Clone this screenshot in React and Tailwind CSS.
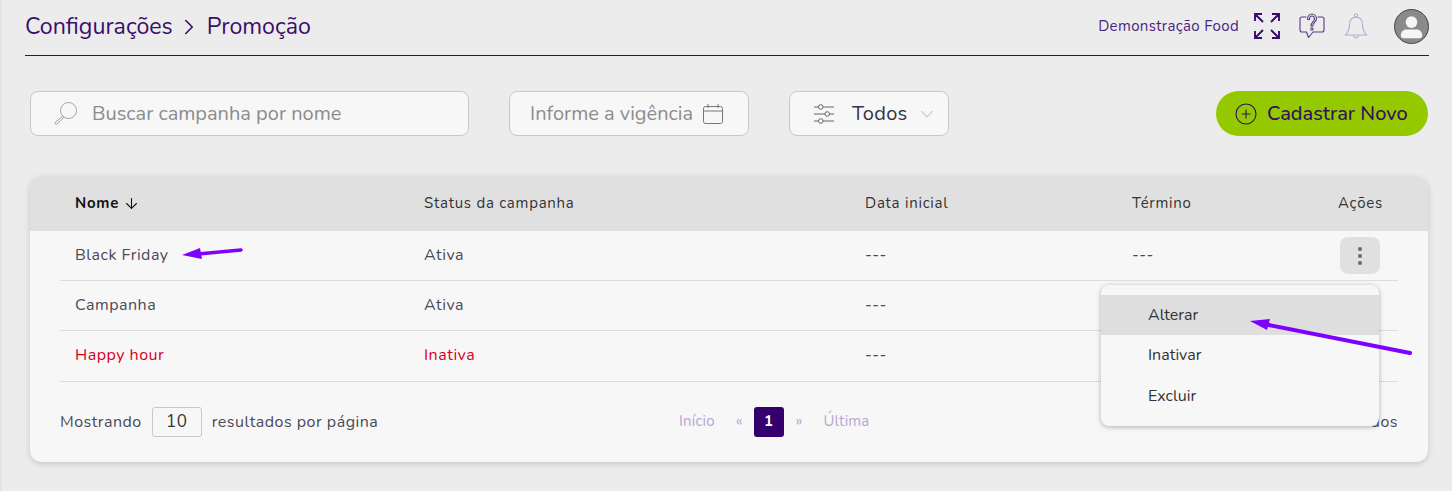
import { ArrowDown, ChevronDown, ChevronRight, CirclePlus } from "lucide-react";

const font = "font-['Nunito','Noto_Sans','Open_Sans',sans-serif]";

const cols = "grid grid-cols-[349px_441px_267px_206px_75px]";

const rows = [
  { name: "Black Friday", status: "Ativa", start: "---", end: "---", menu: true },
  { name: "Campanha", status: "Ativa", start: "---" },
  { name: "Happy hour", status: "Inativa", start: "---", off: true },
];

const Expand = () => (
  <svg width="26" height="26" viewBox="0 0 26 26" fill="none" stroke="#3a0a6e" strokeWidth="1.9">
    <path d="M1 8V1h7M1 1l8 8M18 1h7v7M25 1l-8 8M1 18v7h7M1 25l8-8M25 18v7h-7M25 25l-8-8" />
  </svg>
);

const HelpBubble = () => (
  <svg width="26" height="26" viewBox="0 0 26 26" fill="none" stroke="#5b3a86" strokeWidth="1.1" strokeLinecap="round" strokeLinejoin="round">
    <path d="M7 4H3Q1 4 1 6V17Q1 19 3 19H7.5L9.5 24.5L14 19H23Q25 19 25 17V6Q25 4 23 4H19" />
    <path d="M8.5 6.5C8.5 3 10.5 1 13 1S17.5 3 17.5 6C17.5 9 13.8 9.5 13.8 13H12C12 9 15.5 8.5 15.5 6C15.5 4.3 14.5 3 13 3S10.5 4.5 10.5 6.5Z" />
    <circle cx="12.9" cy="16" r="1.2" />
  </svg>
);

const BellIcon = () => (
  <svg width="24" height="26" viewBox="0 0 24 26" fill="none" stroke="#b9a9d3" strokeWidth="1.1" strokeLinejoin="round">
    <circle cx="12" cy="2.5" r="1.7" />
    <path d="M12 4.2C7.5 4.2 5.5 7.5 5.5 11.5C5.5 16.5 4 19.5 1.2 22H22.8C20 19.5 18.5 16.5 18.5 11.5C18.5 7.5 16.5 4.2 12 4.2Z" />
    <path d="M9.5 22.2a2.5 2.5 0 0 0 5 0" />
  </svg>
);

const Magnifier = () => (
  <svg width="24" height="23" viewBox="0 0 24 23" fill="none" stroke="#a3a3a3" strokeWidth="1">
    <circle cx="14.5" cy="8.5" r="8" />
    <path d="M8.8 14.2L1.2 20.4Q0.6 21.2 1.4 22Q2.2 22.6 3 22L10 15.4" />
  </svg>
);

const CalendarIcon = () => (
  <svg width="20" height="20" viewBox="0 0 20 20" fill="none" stroke="#777" strokeWidth="1">
    <rect x="0.5" y="2.5" width="19" height="17" rx="2" />
    <path d="M0.5 7H19.5M5 0V4M15 0V4" />
  </svg>
);

const Sliders = () => (
  <svg width="20" height="20" viewBox="0 0 20 20" fill="none" stroke="#666" strokeWidth="1">
    <path d="M0 3H4.5M9 3H20M0 10H11M15.5 10H20M0 17H4.5M9 17H20" />
    <circle cx="6.8" cy="3" r="2.3" />
    <circle cx="13.2" cy="10" r="2.3" />
    <circle cx="6.8" cy="17" r="2.3" />
  </svg>
);

const Avatar = () => (
  <div className="flex h-[35px] w-[35px] items-center justify-center overflow-hidden rounded-full border border-[#444] bg-[#8a8a8a]">
    <svg width="33" height="33" viewBox="0 0 34 34" fill="#f5f5f5">
      <circle cx="17" cy="12.5" r="6" />
      <path d="M6 26c0-4 3-6 6-6h10c3 0 6 2 6 6 0 2-1 3-3 3H9c-2 0-3-1-3-3z" />
    </svg>
  </div>
);

const Arrow = ({ className, width, height, d, tip, stroke }) => (
  <svg className={`pointer-events-none absolute ${className}`} width={width} height={height} viewBox={`0 0 ${width} ${height}`}>
    <path d={d} stroke="#7f00ff" strokeWidth={stroke} strokeLinecap="round" fill="none" />
    <polygon points={tip} fill="#7f00ff" />
  </svg>
);

export default function App() {
  return (
    <div className={`${font} relative h-[491px] w-[1452px] overflow-hidden border-l-2 border-[#e4e4e4] bg-[#ececec] text-[#4a4a55]`}>
      {/* Header */}
      <header className="ml-[23px] mr-[23px] flex h-[56px] items-center justify-between border-b border-[#35105f] pb-[3px]">
        <div className="mt-[2px] flex items-center text-[23.2px] text-[#3a0f6b]">
          <span>Configurações</span>
          <ChevronRight size={26} strokeWidth={1.5} className="ml-[3px] mr-[5px]" />
          <span>Promoção</span>
        </div>
        <div className="flex items-center">
          <span className="mr-[15px] text-[15px] tracking-[0.35px] text-[#4b1f85]">Demonstração Food</span>
          <Expand />
          <div className="ml-[19px]"><HelpBubble /></div>
          <div className="ml-[19px]"><BellIcon /></div>
          <div className="ml-[26px]"><Avatar /></div>
        </div>
      </header>

      {/* Filters */}
      <div className="ml-[28px] mr-[24px] mt-[35px] flex h-[45px] items-center">
        <div className="flex h-full w-[439px] items-center rounded-lg border border-[#c8c8c8] bg-[#f7f7f7] pl-[23px] text-[20px] text-[#8c8c8c]">
          <Magnifier />
          <span className="ml-[14px]">Buscar campanha por nome</span>
        </div>
        <div className="ml-[40px] flex h-full w-[240px] items-center rounded-lg border border-[#c8c8c8] bg-[#f7f7f7] pl-[20px] text-[20px] text-[#8c8c8c]">
          <span>Informe a vigência</span>
          <div className="ml-[10px]"><CalendarIcon /></div>
        </div>
        <div className="ml-[40px] flex h-full w-[160px] items-center rounded-lg border border-[#c8c8c8] bg-[#f7f7f7] pl-[24px] text-[20px] tracking-[0.3px] text-[#333344]">
          <Sliders />
          <span className="ml-[18px]">Todos</span>
          <ChevronDown size={22} strokeWidth={1.1} className="ml-[8px] text-[#bbb]" />
        </div>
        <button className="ml-auto flex h-[45px] w-[212px] items-center justify-start rounded-full bg-[#94c900] pl-[18px] text-[20px] font-medium text-[#35105f]">
          <CirclePlus size={24} strokeWidth={1.1} className="mr-[9px]" />
          Cadastrar Novo
        </button>
      </div>

      {/* Table card */}
      <div className="ml-[28px] mr-[24px] mt-[40px] h-[286px] overflow-hidden rounded-xl bg-[#f7f7f7] shadow-[0_2px_6px_rgba(0,0,0,0.16)]">
        <div className="h-[55px] bg-[#e0e0e0] pl-[30px] pr-[30px]">
          <div className={`${cols} h-full items-center text-[15px] tracking-[0.75px] text-[#333]`}>
            <div className="flex items-center pl-[15px] font-bold text-[#111]">
              Nome <ArrowDown size={17} strokeWidth={1.5} className="ml-[4px]" />
            </div>
            <div className="pl-[15px]">Status da campanha</div>
            <div className="pl-[15px]">Data inicial</div>
            <div className="pl-[15px]">Término</div>
            <div className="pl-[15px]">Ações</div>
          </div>
        </div>
        <div className="px-[30px]">
          {rows.map((row) => (
            <div key={row.name} className={`${cols} ${row.off ? "h-[51px] text-[#d4001a]" : "h-[50px]"} items-center border-b border-[#dcdcdc] text-[16px] tracking-[0.5px]`}>
              <div className="pb-[2px] pl-[15px]">{row.name}</div>
              <div className="pb-[2px] pl-[15px]">{row.status}</div>
              <div className={`pb-[2px] pl-[15px] ${row.off ? "text-[#4a4a55]" : ""}`}>{row.start}</div>
              <div className="pb-[2px] pl-[15px]">{row.end}</div>
              <div>
                {row.menu && (
                  <div className="ml-[17px] flex h-[37px] w-[40px] flex-col items-center justify-center gap-[3px] rounded-lg bg-[#e0e0e0]">
                    <span className="h-[4px] w-[4px] rounded-full bg-[#666]" />
                    <span className="h-[4px] w-[4px] rounded-full bg-[#666]" />
                    <span className="h-[4px] w-[4px] rounded-full bg-[#666]" />
                  </div>
                )}
              </div>
            </div>
          ))}
          <div className="relative flex h-[79px] items-center justify-between text-[16px] tracking-[0.5px]">
            <div className="flex items-center">
              <span>Mostrando</span>
              <span className="mx-[10px] flex h-[30px] w-[50px] items-center justify-center rounded-[3px] border border-[#c8c8c8] text-[17px] text-[#333]">10</span>
              <span>resultados por página</span>
            </div>
            <div className="absolute left-[619px] flex items-center text-[15px] tracking-[0.2px] text-[#b9a5d3]">
              <span>Início</span>
              <span className="ml-[21px]">«</span>
              <span className="ml-[11px] flex h-[30px] w-[30px] items-center justify-center rounded-[3px] bg-[#35006e] font-bold text-white">1</span>
              <span className="ml-[12px]">»</span>
              <span className="ml-[21px]">Última</span>
            </div>
            <span>dos</span>
          </div>
        </div>
      </div>

      {/* Row actions menu */}
      <div className="absolute left-[1099px] top-[285px] w-[278px] rounded-lg bg-[#f7f7f7] py-[10px] text-[16px] text-[#333] shadow-[0_1px_5px_rgba(0,0,0,0.3)]">
        <div className="flex h-[40px] items-center bg-[#dedede] pl-[47px]">Alterar</div>
        <div className="flex h-[40px] items-center pl-[47px]">Inativar</div>
        <div className="flex h-[41px] items-center pl-[47px]">Excluir</div>
      </div>

      {/* Annotation arrows */}
      <Arrow className="left-[178px] top-[245px]" width={64} height={18} stroke={3.5} d="M18 9 L61 5" tip="2,10 20,3 22,14" />
      <Arrow className="left-[1246px] top-[316px]" width={166} height={40} stroke={4} d="M16 8 L162 37" tip="2,5 22,3 19,14" />
    </div>
  );
}
